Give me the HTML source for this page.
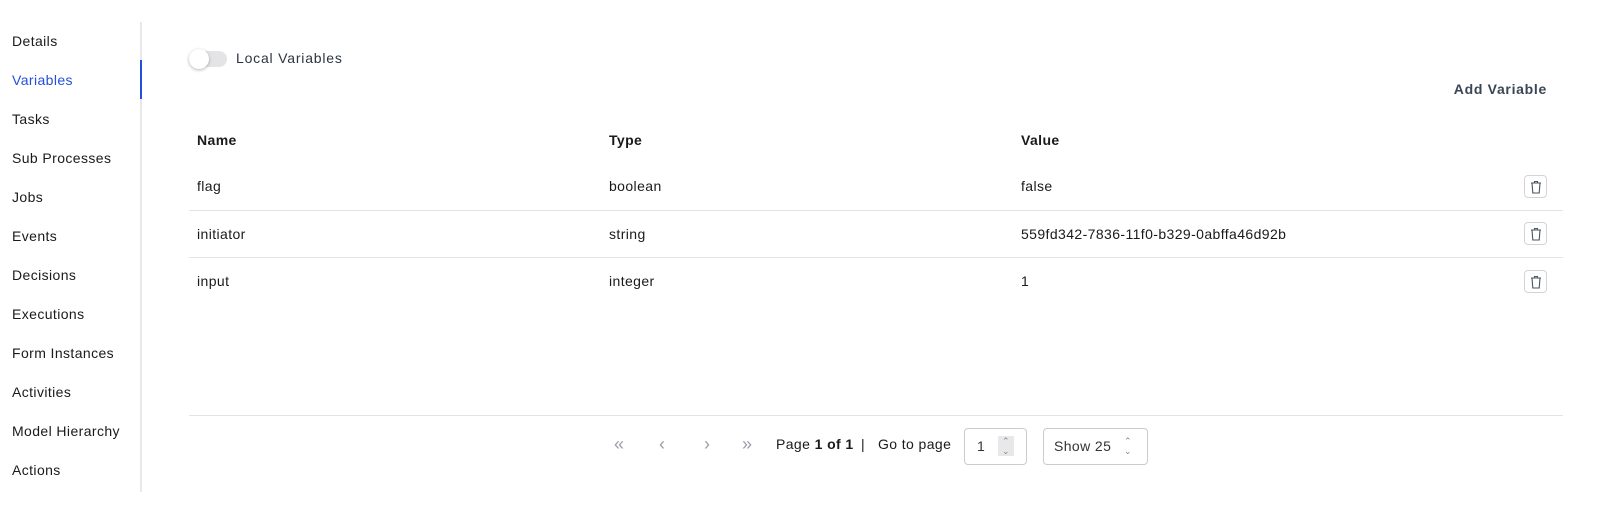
<!DOCTYPE html>
<html><head><style>
*{margin:0;padding:0;box-sizing:border-box}
body{width:1609px;height:509px;background:#fff;font-family:"Liberation Sans",sans-serif;color:#1a1a1a;font-size:14px;letter-spacing:.4px;position:relative;overflow:hidden}
.nav{position:absolute;left:0;top:22px;width:142px;height:470px;border-right:2px solid #e8e8ec}
.nav div{position:absolute;left:12px;font-size:14px}
.ind{position:absolute;left:140px;top:60px;width:2px;height:39px;background:#2450d8}
.a{position:absolute;white-space:nowrap}
.hl{position:absolute;left:189px;width:1374px;height:1px;background:#e3e3e6}
.del{position:absolute;left:1524px;width:23px;height:23px;border:1px solid #d4d4d8;border-radius:4px}
.del svg{position:absolute;left:5px;top:4px}
.box{position:absolute;border:1px solid #c9ccd3;border-radius:4px;height:37px;top:428px}
</style></head><body>
<div class="nav">
<div style="top:11px">Details</div>
<div style="top:50px;color:#2450d8">Variables</div>
<div style="top:89px">Tasks</div>
<div style="top:128px">Sub Processes</div>
<div style="top:167px">Jobs</div>
<div style="top:206px">Events</div>
<div style="top:245px">Decisions</div>
<div style="top:284px">Executions</div>
<div style="top:323px">Form Instances</div>
<div style="top:362px">Activities</div>
<div style="top:401px">Model Hierarchy</div>
<div style="top:440px">Actions</div>
</div>
<div class="ind"></div>
<div class="a" style="left:189px;top:51px;width:38px;height:16px;border-radius:8px;background:#e4e4e7"></div>
<div class="a" style="left:189px;top:49px;width:20px;height:20px;border-radius:10px;background:#fff;box-shadow:0 1px 3px rgba(0,0,0,.3)"></div>
<div class="a" style="left:236px;top:50px;color:#2d3440;letter-spacing:.8px">Local Variables</div>
<div class="a" style="right:62px;top:81px;color:#3b4556;font-weight:bold;letter-spacing:.7px">Add Variable</div>
<div class="a" style="left:197px;top:132px;font-weight:bold">Name</div>
<div class="a" style="left:609px;top:132px;font-weight:bold">Type</div>
<div class="a" style="left:1021px;top:132px;font-weight:bold">Value</div>
<div class="a" style="left:197px;top:178px">flag</div>
<div class="a" style="left:609px;top:178px">boolean</div>
<div class="a" style="left:1021px;top:178px">false</div>
<div class="hl" style="top:210px"></div>
<div class="a" style="left:197px;top:226px">initiator</div>
<div class="a" style="left:609px;top:226px">string</div>
<div class="a" style="left:1021px;top:226px">559fd342-7836-11f0-b329-0abffa46d92b</div>
<div class="hl" style="top:257px"></div>
<div class="a" style="left:197px;top:273px">input</div>
<div class="a" style="left:609px;top:273px">integer</div>
<div class="a" style="left:1021px;top:273px">1</div>
<div class="del" style="top:175px"><svg width="12" height="14" viewBox="0 0 12 14" fill="none" stroke="#4a5260" stroke-width="1.1"><path d="M1 3h10M4.5 3V1.5h3V3M2 3l.8 10h6.4L10 3"/></svg></div>
<div class="del" style="top:222px"><svg width="12" height="14" viewBox="0 0 12 14" fill="none" stroke="#4a5260" stroke-width="1.1"><path d="M1 3h10M4.5 3V1.5h3V3M2 3l.8 10h6.4L10 3"/></svg></div>
<div class="del" style="top:270px"><svg width="12" height="14" viewBox="0 0 12 14" fill="none" stroke="#4a5260" stroke-width="1.1"><path d="M1 3h10M4.5 3V1.5h3V3M2 3l.8 10h6.4L10 3"/></svg></div>
<div class="hl" style="top:415px"></div>
<div class="a" style="left:614px;top:434px;color:#9aa0aa;font-size:18px">«</div>
<div class="a" style="left:659px;top:434px;color:#9aa0aa;font-size:18px">‹</div>
<div class="a" style="left:704px;top:434px;color:#9aa0aa;font-size:18px">›</div>
<div class="a" style="left:742px;top:434px;color:#9aa0aa;font-size:18px">»</div>
<div class="a" style="left:776px;top:436px">Page <b>1 of 1</b></div>
<div class="a" style="left:861px;top:436px">|</div>
<div class="a" style="left:878px;top:436px">Go to page</div>
<div class="box" style="left:964px;width:63px"><span class="a" style="left:12px;top:9px;color:#333">1</span><span class="a" style="left:33px;top:7px;width:16px;height:20px;background:#e8e8ea;color:#888;font-size:9px;line-height:10px;text-align:center">⌃<br>⌄</span></div>
<div class="box" style="left:1043px;width:105px"><span class="a" style="left:10px;top:9px;color:#333">Show 25</span><span class="a" style="left:80px;top:7px;color:#888;font-size:9px;line-height:10px">⌃<br>⌄</span></div>
</body></html>
